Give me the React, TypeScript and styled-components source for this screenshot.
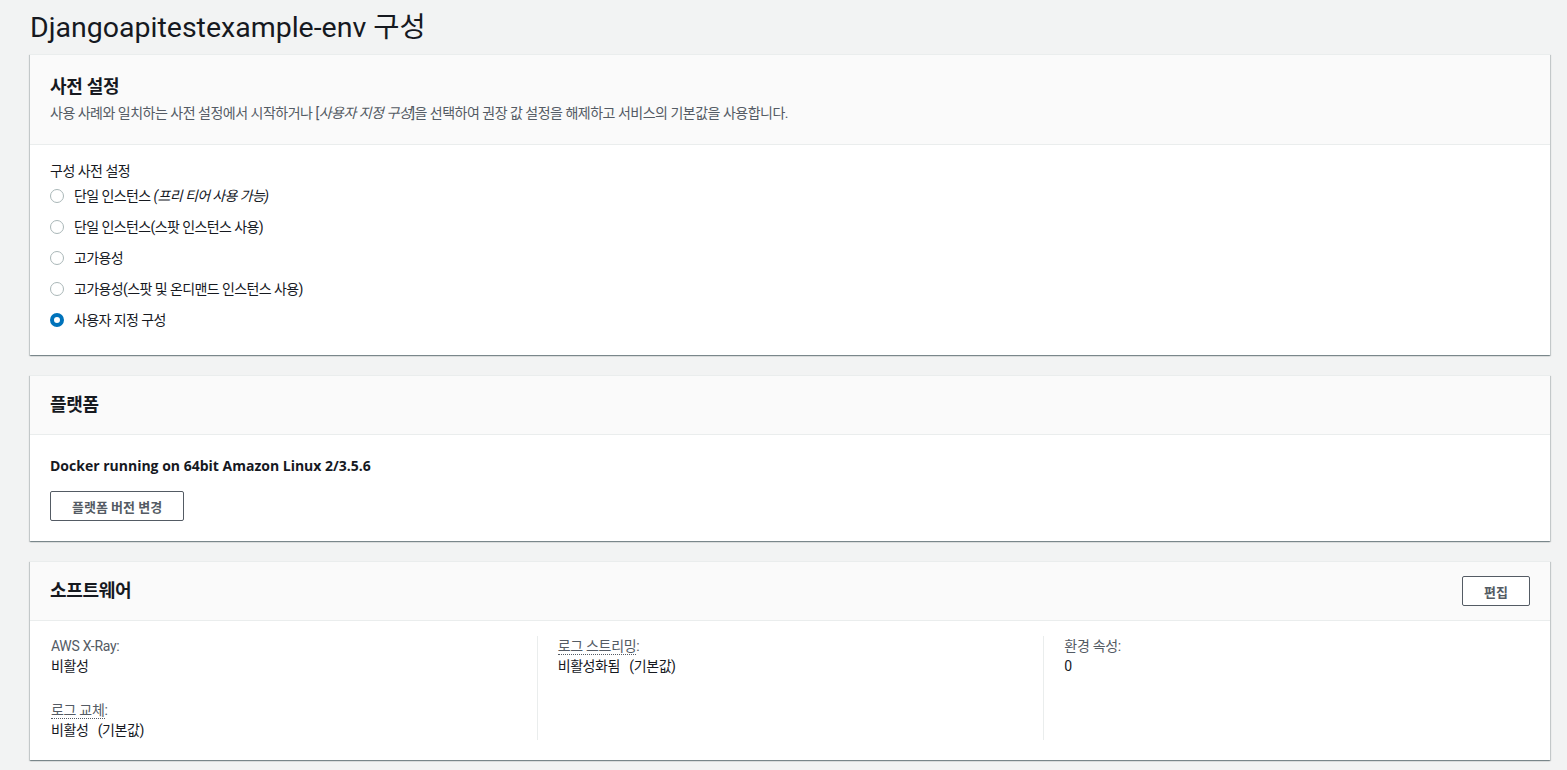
import React from 'react';
import styled, { createGlobalStyle } from 'styled-components';

const GlobalStyle = createGlobalStyle`
  html, body {
    margin: 0;
    padding: 0;
    background: #f2f3f3;
  }
  body {
    font-family: "Helvetica Neue", Roboto, Arial, "Noto Sans CJK KR", sans-serif;
    color: #16191f;
    font-size: 14px;
    -webkit-font-smoothing: antialiased;
  }
`;

const Page = styled.div`
  padding: 10px 17px 20px 30px;
`;

const PageTitle = styled.h1`
  margin: 0 0 8px;
  font-size: 28.5px;
  line-height: 36px;
  font-weight: 400;
  color: #16191f;
`;

const Stack = styled.div`
  display: flex;
  flex-direction: column;
  gap: 20px;
`;

const Panel = styled.section`
  background: #fff;
  border-top: 1px solid #eaeded;
  box-shadow: 0 1px 1px 0 rgba(0, 28, 36, 0.3), 1px 1px 1px 0 rgba(0, 28, 36, 0.15),
    -1px 1px 1px 0 rgba(0, 28, 36, 0.15);
`;

const PanelHeader = styled.header<{ $tall?: boolean }>`
  display: flex;
  align-items: center;
  justify-content: space-between;
  background: #fafafa;
  border-bottom: 1px solid #eaeded;
  padding: ${(p) => (p.$tall ? '17px 20px 13px' : '14px 20px 14px')};
`;

const HeaderText = styled.div`
  display: flex;
  flex-direction: column;
`;

const PanelTitle = styled.h2`
  margin: 0;
  font-size: 18px;
  line-height: 30px;
  font-weight: 700;
  letter-spacing: -0.3px;
  color: #16191f;
`;

const PanelDesc = styled.p`
  margin: 1px 0 8px;
  font-size: 14px;
  line-height: 20px;
  letter-spacing: -0.5px;
  color: #545b64;

  em {
    font-style: italic;
  }
`;

const PanelBody = styled.div<{ $pad?: string }>`
  padding: ${(p) => p.$pad || '20px'};
`;

const FieldLabel = styled.div`
  font-size: 14px;
  line-height: 20px;
  letter-spacing: -0.5px;
  color: #16191f;
  margin-bottom: 4px;
`;

const RadioList = styled.div`
  display: flex;
  flex-direction: column;
  gap: 9px;
`;

const RadioRow = styled.label`
  display: flex;
  align-items: center;
  gap: 10px;
  font-size: 14px;
  line-height: 22px;
  letter-spacing: -0.6px;
  color: #16191f;
  cursor: pointer;

  em {
    font-style: italic;
  }
`;

const RadioDot = styled.span<{ $checked?: boolean }>`
  box-sizing: border-box;
  width: 14px;
  height: 14px;
  border-radius: 50%;
  flex: none;
  background: #fff;
  border: ${(p) => (p.$checked ? '4px solid #0073bb' : '1px solid #aab7b8')};
`;

const PlatformName = styled.div`
  font-family: "Open Sans", Roboto, Arial, sans-serif;
  font-size: 14px;
  line-height: 22px;
  font-weight: 700;
  color: #16191f;
  margin-bottom: 14px;
`;

const Button = styled.button`
  box-sizing: border-box;
  height: 30px;
  padding: 0 21px;
  background: #fff;
  border: 1px solid #545b64;
  border-radius: 2px;
  font-family: inherit;
  font-size: 13px;
  font-weight: 700;
  color: #545b64;
  cursor: pointer;
`;

const Columns = styled.div`
  display: grid;
  grid-template-columns: repeat(3, 1fr);
  padding: 15px 0 20px;
`;

const Column = styled.div<{ $first?: boolean }>`
  padding-left: 20px;
  border-left: 1px solid ${(p) => (p.$first ? 'transparent' : '#eaeded')};
  display: flex;
  flex-direction: column;
  gap: 24px;
`;

const Item = styled.div`
  display: flex;
  flex-direction: column;
`;

const ItemLabel = styled.div`
  font-size: 14px;
  line-height: 20px;
  letter-spacing: -0.3px;
  color: #545b64;
`;

const InfoLink = styled.span`
  border-bottom: 1px dotted #545b64;
`;

const ItemValue = styled.div`
  font-size: 14px;
  line-height: 20px;
  letter-spacing: -0.4px;
  color: #16191f;
  white-space: pre;
`;

const presets = [
  { label: <>단일 인스턴스 <em>(프리 티어 사용 가능)</em></>, checked: false },
  { label: <>단일 인스턴스(스팟 인스턴스 사용)</>, checked: false },
  { label: <>고가용성</>, checked: false },
  { label: <>고가용성(스팟 및 온디맨드 인스턴스 사용)</>, checked: false },
  { label: <>사용자 지정 구성</>, checked: true },
];

export default function App() {
  return (
    <Page>
      <GlobalStyle />
      <PageTitle>Djangoapitestexample-env 구성</PageTitle>
      <Stack>
        <Panel>
          <PanelHeader $tall>
            <HeaderText>
              <PanelTitle>사전 설정</PanelTitle>
              <PanelDesc>
                사용 사례와 일치하는 사전 설정에서 시작하거나 [<em>사용자 지정 구성</em>]을 선택하여 권장 값
                설정을 해제하고 서비스의 기본값을 사용합니다.
              </PanelDesc>
            </HeaderText>
          </PanelHeader>
          <PanelBody $pad="16px 20px 24px">
            <FieldLabel>구성 사전 설정</FieldLabel>
            <RadioList>
              {presets.map((p, i) => (
                <RadioRow key={i}>
                  <RadioDot $checked={p.checked} />
                  <span>{p.label}</span>
                </RadioRow>
              ))}
            </RadioList>
          </PanelBody>
        </Panel>

        <Panel>
          <PanelHeader>
            <PanelTitle>플랫폼</PanelTitle>
          </PanelHeader>
          <PanelBody>
            <PlatformName>Docker running on 64bit Amazon Linux 2/3.5.6</PlatformName>
            <Button>플랫폼 버전 변경</Button>
          </PanelBody>
        </Panel>

        <Panel>
          <PanelHeader>
            <PanelTitle>소프트웨어</PanelTitle>
            <Button>편집</Button>
          </PanelHeader>
          <Columns>
            <Column $first>
              <Item>
                <ItemLabel>AWS X-Ray:</ItemLabel>
                <ItemValue>비활성</ItemValue>
              </Item>
              <Item>
                <ItemLabel>
                  <InfoLink>로그 교체</InfoLink>:
                </ItemLabel>
                <ItemValue>{'비활성   (기본값)'}</ItemValue>
              </Item>
            </Column>
            <Column>
              <Item>
                <ItemLabel>
                  <InfoLink>로그 스트리밍</InfoLink>:
                </ItemLabel>
                <ItemValue>{'비활성화됨   (기본값)'}</ItemValue>
              </Item>
            </Column>
            <Column>
              <Item>
                <ItemLabel>환경 속성:</ItemLabel>
                <ItemValue>0</ItemValue>
              </Item>
            </Column>
          </Columns>
        </Panel>
      </Stack>
    </Page>
  );
}
